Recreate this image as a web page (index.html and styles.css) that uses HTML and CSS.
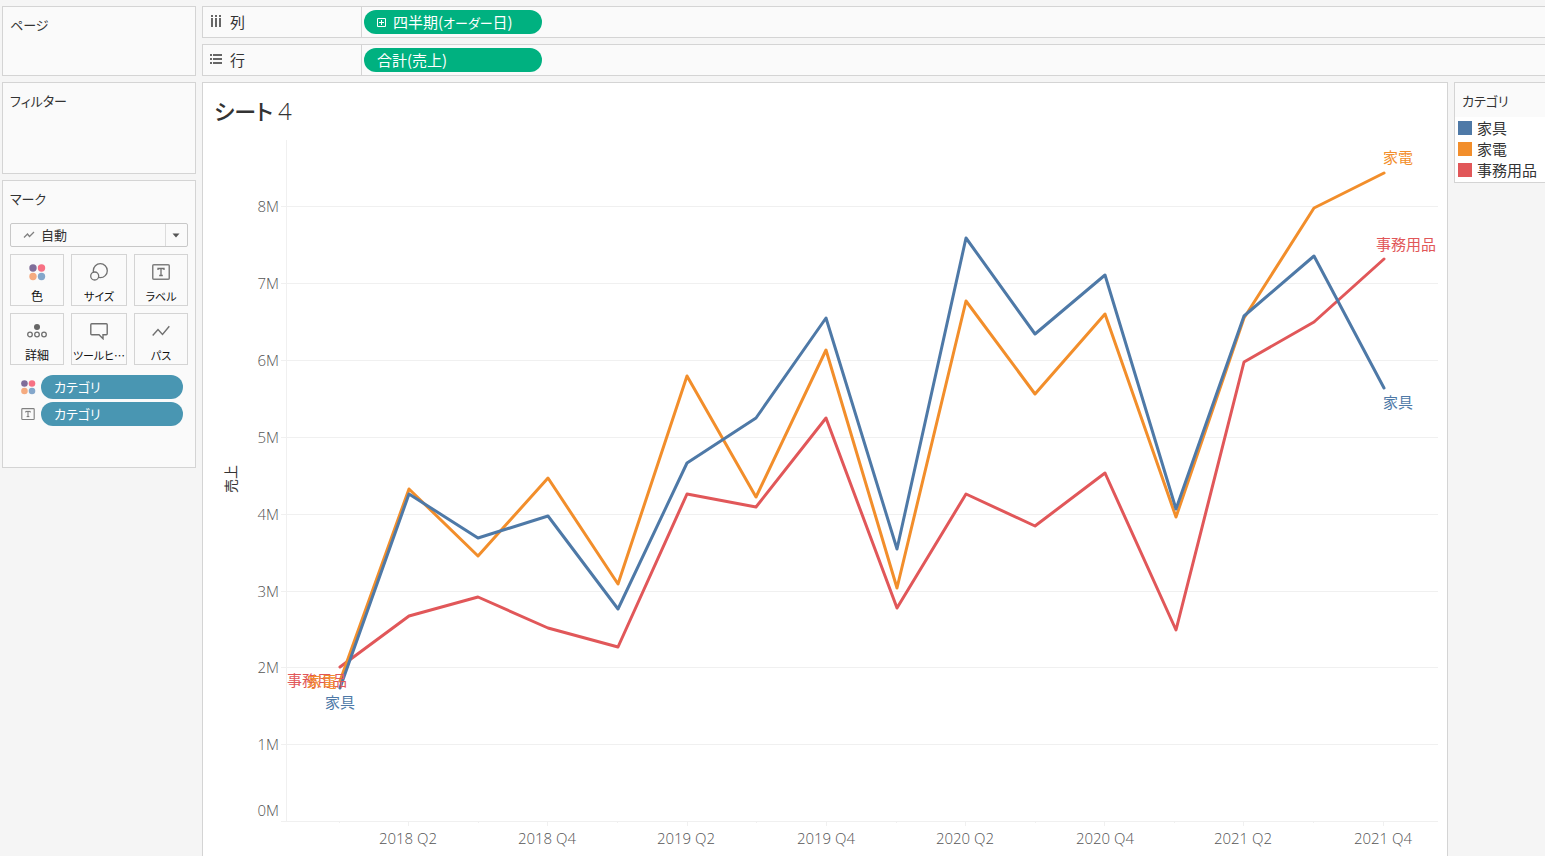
FILE: index.html
```html
<!DOCTYPE html>
<html lang="ja">
<head>
<meta charset="utf-8">
<title>シート 4</title>
<link rel="stylesheet" href="styles.css">
</head>
<body>
<svg class="defs" aria-hidden="true">
  <symbol id="icon-color" viewBox="0 0 18 18">
    <circle cx="5" cy="5" r="3.7" fill="#806e9a"/><circle cx="13.5" cy="5" r="3.7" fill="#f77184"/>
    <circle cx="5" cy="13.5" r="3.7" fill="#f5ab80"/><circle cx="13.5" cy="13.5" r="3.7" fill="#84a7cb"/>
  </symbol>
  <symbol id="icon-label" viewBox="0 0 18 16">
    <rect x="0.75" y="0.75" width="16.5" height="14.5" rx="1" fill="none" stroke="#808080" stroke-width="1.5"/>
    <path d="M6 6V4.5H12V6M9 4.5V11.5M7.2 11.5H10.8" fill="none" stroke="#707070" stroke-width="1.3"/>
  </symbol>
</svg>
<div class="workspace">
  <aside class="sidebar">
    <section class="card card-pages"><h2 class="card-title">ページ</h2></section>
    <section class="card card-filters"><h2 class="card-title">フィルター</h2></section>
    <section class="card card-marks">
      <h2 class="card-title" id="marks-title">マーク</h2>
      <div class="mark-type">
        <svg class="type-icon" viewBox="0 0 12 8"><path d="M1 6.5L4.5 3L6.5 5.5L11 1" fill="none" stroke="#808080" stroke-width="1.3"/></svg>
        <select class="type-select" aria-labelledby="marks-title"><option>自動</option></select>
        <span class="type-arrow"><svg width="8" height="5" viewBox="0 0 8 5"><path d="M0.5 0.5H7.5L4 4.5Z" fill="#555"/></svg></span>
      </div>
      <div class="mark-grid">
        <button class="mark-button"><svg width="18" height="18"><use href="#icon-color"/></svg><span>色</span></button>
        <button class="mark-button"><svg width="18" height="18" viewBox="0 0 18 18" fill="#fafafa" stroke="#707070" stroke-width="1.3"><circle cx="10.3" cy="7.7" r="7"/><circle cx="4.7" cy="13" r="4"/></svg><span class="kana-small">サイズ</span></button>
        <button class="mark-button"><svg width="18" height="18" viewBox="0 -1 18 18"><use href="#icon-label" width="18" height="16"/></svg><span class="kana-small">ラベル</span></button>
        <button class="mark-button"><svg width="20" height="18" viewBox="0 -2 20 18"><circle cx="10" cy="3" r="3" fill="#666"/><g fill="none" stroke="#707070" stroke-width="1.3"><circle cx="3" cy="10.5" r="2.3"/><circle cx="10" cy="10.5" r="2.3"/><circle cx="17" cy="10.5" r="2.3"/></g></svg><span>詳細</span></button>
        <button class="mark-button"><svg width="18" height="18" viewBox="0 -1 18 18"><path d="M1.7 0.8H16.3Q17.2 0.8 17.2 1.7V10.8Q17.2 11.7 16.3 11.7H13V15.7L9 11.7H1.7Q0.8 11.7 0.8 10.8V1.7Q0.8 0.8 1.7 0.8Z" fill="none" stroke="#707070" stroke-width="1.4"/></svg><span class="kana-small">ツールヒ…</span></button>
        <button class="mark-button"><svg width="18" height="18" viewBox="0 -3 18 18"><path d="M0.7 10.5L6 4.5L10.5 9.5L17.3 1.2" fill="none" stroke="#707070" stroke-width="1.4"/></svg><span class="kana-small">パス</span></button>
      </div>
      <ul class="mark-pills">
        <li class="mark-row"><svg width="16" height="16"><use href="#icon-color"/></svg><button class="pill pill-dimension">カテゴリ</button></li>
        <li class="mark-row"><svg width="14" height="12"><use href="#icon-label"/></svg><button class="pill pill-dimension">カテゴリ</button></li>
      </ul>
    </section>
  </aside>

  <div class="main">
    <section class="shelf">
      <h2 class="shelf-label"><svg width="12" height="14" viewBox="-1 0 12 14" fill="#666"><path d="M0 0H2V2H0ZM4 0H6V2H4ZM8 0H10V2H8ZM0 3H2V12H0ZM4 3H6V12H4ZM8 3H10V12H8Z"/></svg>列</h2>
      <button class="pill pill-measure"><svg width="9" height="9" viewBox="0 0 9 9" fill="none" stroke="#fff"><path d="M0.5 0.5H8.5V8.5H0.5ZM2 4.5H7M4.5 2V7"/></svg><span>四半期(<span class="kana">オーダー</span>日)</span></button>
    </section>
    <section class="shelf">
      <h2 class="shelf-label"><svg width="12" height="12" viewBox="0 0 12 12" fill="#666"><path d="M0 0H2V2H0ZM0 4H2V6H0ZM0 8H2V10H0ZM3 0H12V2H3ZM3 4H12V6H3ZM3 8H12V10H3Z"/></svg>行</h2>
      <button class="pill pill-measure">合計(売上)</button>
    </section>

    <div class="content">
      <main class="sheet">
        <h1 class="sheet-title">シート <span class="sheet-number">4</span></h1>
        <svg class="chart" viewBox="203 140 1244 716" role="img" aria-label="四半期(オーダー日)ごとの売上">
          <g class="grid-lines">
            <path d="M281 206.5H1438M281 283.5H1438M281 360.5H1438M281 437.5H1438M281 514.5H1438M281 591.5H1438M281 667.5H1438M281 744.5H1438M281 821.5H1438"/>
            <path d="M286.5 140V821"/>
            <path d="M408.5 822V826M547.5 822V826M687.5 822V826M826.5 822V826M965.5 822V826M1104.5 822V826M1243.5 822V826M1383.5 822V826"/>
            <path d="M339.5 822V823M478.5 822V823M617.5 822V823M756.5 822V823M896.5 822V823M1035.5 822V823M1174.5 822V823M1313.5 822V823"/>
          </g>
          <g class="axis-text axis-y">
            <text x="279" y="212">8M</text><text x="279" y="289">7M</text><text x="279" y="366">6M</text>
            <text x="279" y="443">5M</text><text x="279" y="520">4M</text><text x="279" y="597">3M</text>
            <text x="279" y="673">2M</text><text x="279" y="750">1M</text><text x="279" y="816">0M</text>
          </g>
          <g class="axis-text axis-x">
            <text x="408" y="844">2018 Q2</text><text x="547" y="844">2018 Q4</text><text x="686" y="844">2019 Q2</text>
            <text x="826" y="844">2019 Q4</text><text x="965" y="844">2020 Q2</text><text x="1105" y="844">2020 Q4</text>
            <text x="1243" y="844">2021 Q2</text><text x="1383" y="844">2021 Q4</text>
          </g>
          <text class="axis-title" transform="translate(236 479) rotate(-90)">売上</text>
          <g class="series">
            <polyline stroke="#e15759" points="340,667 409,616 478,597 548,628 618,647 687,494 756,507 826,418 897,608 966,494 1035,526 1105,473 1176,630 1244,362 1314,322 1384,259"/>
            <polyline stroke="#f28e2b" points="340,681 409,489 478,556 548,478 618,584 687,376 756,497 826,350 897,588 966,301 1035,394 1105,314 1176,517 1244,318 1314,208 1384,173"/>
            <polyline stroke="#4e79a7" points="340,688 409,494 478,538 548,516 618,609 687,463 756,418 826,318 897,549 966,238 1035,334 1105,275 1176,509 1244,316 1314,256 1384,388"/>
          </g>
          <g class="mark-text">
            <text fill="#e15759" x="317" y="686">事務用品</text>
            <text fill="#f28e2b" x="322" y="687">家電</text>
            <text fill="#4e79a7" x="340" y="708">家具</text>
            <text fill="#f28e2b" x="1398" y="163">家電</text>
            <text fill="#e15759" x="1406" y="250">事務用品</text>
            <text fill="#4e79a7" x="1398" y="408">家具</text>
          </g>
        </svg>
      </main>
      <aside class="legend">
        <h2 class="legend-title">カテゴリ</h2>
        <ul class="legend-list">
          <li class="legend-item"><span class="swatch swatch-furniture"></span>家具</li>
          <li class="legend-item"><span class="swatch swatch-appliance"></span>家電</li>
          <li class="legend-item"><span class="swatch swatch-office"></span>事務用品</li>
        </ul>
      </aside>
    </div>
  </div>
</div>
</body>
</html>
```
FILE: styles.css
```css
* { box-sizing: border-box; }

body {
  margin: 0;
  background: #f5f5f5;
  color: #333;
  font: 15px/20px "Noto Sans CJK JP", sans-serif;
  overflow: hidden;
}

h1, h2, ul { margin: 0; padding: 0; font-weight: 400; list-style: none; }
button, select { font: inherit; color: inherit; margin: 0; cursor: pointer; }
svg { flex: none; display: block; }

.defs { position: absolute; width: 0; height: 0; }
.kana { font-size: 13px; }
.kana-small { font-size: 11px; }

.workspace {
  display: grid;
  grid-template-columns: 194px minmax(0, 1fr);
  gap: 6px;
  min-height: 100vh;
  padding: 6px 0 0 2px;
}

.sidebar, .main { display: flex; flex-direction: column; gap: 6px; }

/* Sidebar cards */
.card { border: 1px solid #d4d4d4; background: #fafafa; padding: 8px 7px; }
.card-pages { min-height: 70px; }
.card-filters { min-height: 92px; }
.card-marks { min-height: 288px; }
.card-title { font-size: 13px; font-feature-settings: "palt"; }

.mark-type { position: relative; margin-top: 14px; }
.type-select {
  display: block;
  appearance: none;
  width: 100%;
  height: 24px;
  padding: 0 30px;
  border: 1px solid #c8c8c8;
  border-radius: 2px;
  background: #fafafa;
  font-size: 13px;
}
.type-icon { position: absolute; left: 13px; top: 8px; width: 12px; height: 8px; }
.type-arrow {
  position: absolute;
  right: 1px;
  top: 1px;
  bottom: 1px;
  width: 22px;
  padding-right: 1px;
  display: grid;
  place-items: center;
  border-left: 1px solid #dcdcdc;
  pointer-events: none;
}

.mark-grid {
  display: grid;
  grid-template-columns: minmax(0, 54fr) minmax(0, 56fr) minmax(0, 54fr);
  gap: 7px;
  margin-top: 7px;
}
.mark-button {
  display: flex;
  flex-direction: column;
  align-items: center;
  justify-content: space-between;
  height: 52px;
  padding: 8px 0 0;
  border: 1px solid #d4d4d4;
  background: #fafafa;
  color: #111;
  font-size: 12px;
  line-height: 18px;
  white-space: nowrap;
  font-feature-settings: "palt";
}

.mark-pills { display: grid; gap: 3px; margin-top: 10px; padding: 0 5px 0 8px; }
.mark-row { display: grid; grid-template-columns: 20px 1fr; gap: 3px; align-items: center; }
.mark-row svg { justify-self: center; }

.pill {
  display: flex;
  align-items: center;
  gap: 7px;
  height: 24px;
  padding: 0 13px;
  border: 0;
  border-radius: 12px;
  color: #fff;
  white-space: nowrap;
  font-feature-settings: "palt";
}
.pill-dimension { background: #4996b2; font-size: 13px; }
.pill-measure { background: #00b180; width: 178px; }

/* Shelves */
.shelf {
  display: flex;
  align-items: center;
  gap: 2px;
  height: 32px;
  border: 1px solid #d4d4d4;
  border-right: 0;
  background: #fafafa;
}
.shelf-label {
  display: flex;
  align-items: center;
  align-self: stretch;
  gap: 8px;
  width: 159px;
  padding-left: 7px;
  border-right: 1px solid #d4d4d4;
  font-size: 15px;
}

/* Sheet */
.content { display: flex; flex: 1; align-items: flex-start; gap: 6px; }
.sheet {
  flex: 1;
  align-self: stretch;
  min-width: 0;
  border: 1px solid #d4d4d4;
  border-bottom: 0;
  background: #fff;
}
.sheet-title {
  padding: 12px 11px 14px;
  font-size: 22px;
  font-weight: 500;
  line-height: 30px;
  font-feature-settings: "palt";
}
.sheet-number { font-family: "Open Sans", sans-serif; font-weight: 300; font-size: 24px; }

.chart { width: 100%; height: auto; font-size: 15px; }
.grid-lines { stroke: #f0f0f0; fill: none; }
.axis-text { fill: #555; font-family: "Open Sans", sans-serif; font-weight: 300; }
.axis-y { text-anchor: end; }
.axis-x, .axis-title, .mark-text { text-anchor: middle; }
.axis-title { fill: #333; font-size: 14px; }
.series { fill: none; stroke-width: 3; stroke-linecap: round; stroke-linejoin: round; }

/* Legend */
.legend {
  width: 91px;
  border: 1px solid #d4d4d4;
  border-right: 0;
  background: #fff;
}
.legend-title {
  padding: 8px 7px 7px;
  background: #fafafa;
  font-size: 13px;
  line-height: 19px;
  font-feature-settings: "palt";
}
.legend-list { padding: 0 0 2px 3px; }
.legend-item { display: flex; align-items: center; gap: 5px; line-height: 21px; white-space: nowrap; }
.swatch { width: 14px; height: 14px; }
.swatch-furniture { background: #4e79a7; }
.swatch-appliance { background: #f28e2b; }
.swatch-office { background: #e15759; }
```
